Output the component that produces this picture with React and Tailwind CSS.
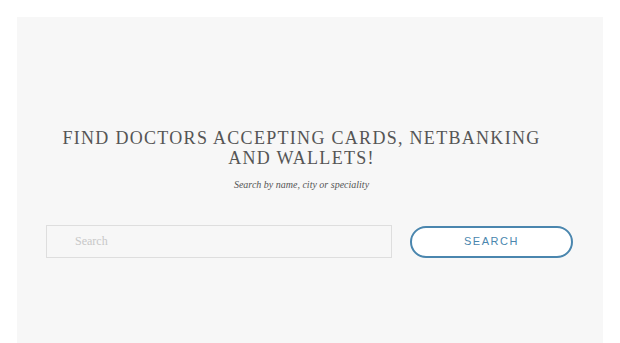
import React from 'react';

export default function App() {
  return (
    <div className="w-[620px] h-[343px] bg-white pt-[17px] px-[17px] overflow-hidden">
      <div className="h-[326px] bg-[#f7f7f7] flex flex-col items-center pt-[111px]">
        {/* Heading */}
        <div className="flex flex-col items-center pr-[17px]">
          <h1 className="font-['Liberation_Serif',serif] text-[18px] leading-[20px] tracking-[0.072em] text-[#555] text-center uppercase">
            Find doctors accepting cards, netbanking
            <br />
            and wallets!
          </h1>
          <p className="mt-[9px] font-['Liberation_Serif',serif] text-[10px] italic text-[#555]">
            Search by name, city or speciality
          </p>
        </div>

        {/* Search row */}
        <div className="mt-[33px] w-full flex items-center pl-[29px] gap-[18px]">
          <input
            type="text"
            placeholder="Search"
            className="w-[346px] h-[33px] border border-[#dedede] bg-[#f7f7f7] pl-[28px] font-['Liberation_Serif',serif] text-[12px] text-[#999] placeholder:text-[#c8c8c8] outline-none"
          />
          <button className="w-[163px] h-[32px] rounded-full border-2 border-[#4a86ae] bg-white font-['Liberation_Sans',Arial,sans-serif] text-[11px] tracking-[0.14em] text-[#4a86ae]">
            SEARCH
          </button>
        </div>
      </div>
    </div>
  );
}
